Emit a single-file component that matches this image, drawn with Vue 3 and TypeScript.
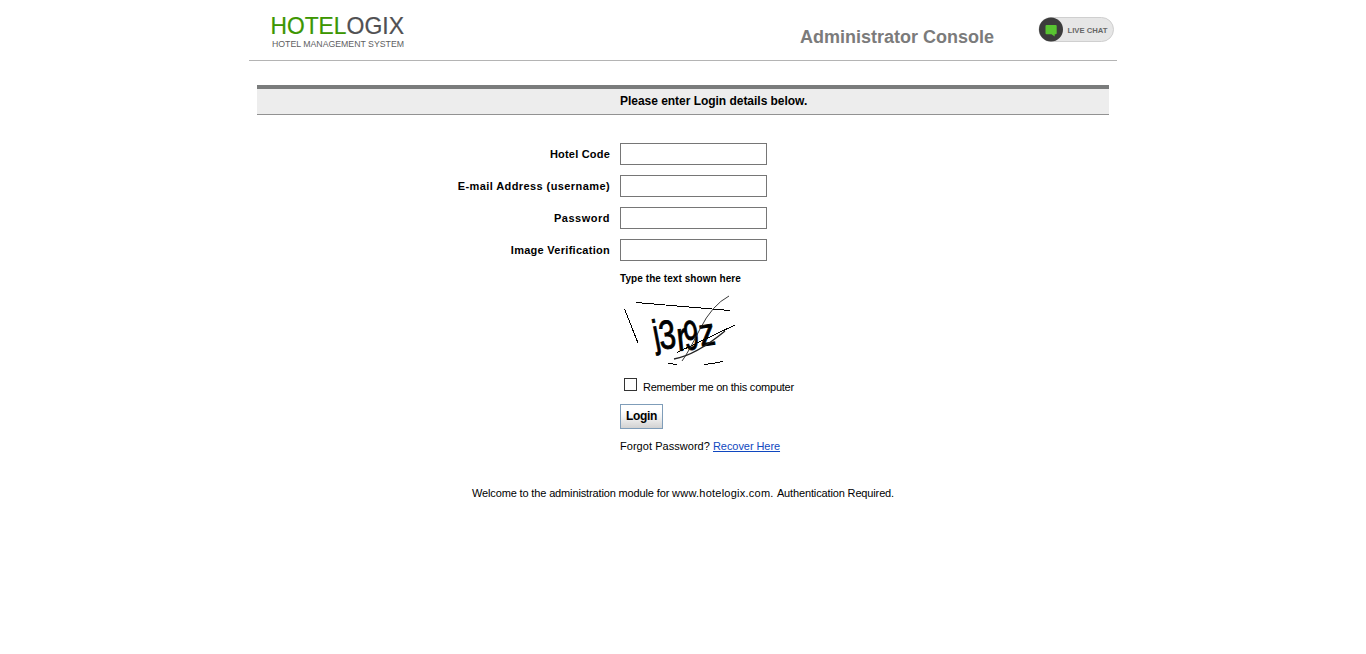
<script setup lang="ts">
import { reactive, ref } from 'vue'

interface Field {
  key: 'hotel' | 'email' | 'password' | 'verification'
  label: string
  type: string
}

const fields: Field[] = [
  { key: 'hotel', label: 'Hotel Code', type: 'text' },
  { key: 'email', label: 'E-mail Address (username)', type: 'text' },
  { key: 'password', label: 'Password', type: 'password' },
  { key: 'verification', label: 'Image Verification', type: 'text' },
]

const form = reactive({ hotel: '', email: '', password: '', verification: '' })
const remember = ref(false)
</script>

<template>
  <div class="page">
    <header class="header">
      <svg class="logo" width="140" height="40" viewBox="0 0 140 40" role="img" aria-label="Hotelogix">
        <text y="24" font-size="24" stroke-width="0.2">
          <tspan x="-0.500" fill="#3c9600" stroke="#3c9600" textLength="76" lengthAdjust="spacingAndGlyphs">HOTEL</tspan>
          <tspan x="75.500" fill="#505052" stroke="#505052" textLength="57.500" lengthAdjust="spacingAndGlyphs">OGIX</tspan>
        </text>
        <text x="1" y="37" font-size="9" fill="#606062" textLength="132" lengthAdjust="spacingAndGlyphs">HOTEL MANAGEMENT SYSTEM</text>
      </svg>
      <h1 class="title">Administrator Console</h1>
      <svg class="chat" width="76" height="26" viewBox="0 0 76 26" role="img" aria-label="Live chat">
        <rect x="1" y="0.5" width="74.500" height="24" rx="12" fill="#e6e6e6" stroke="#cfcfcf" />
        <circle cx="13" cy="12.500" r="12" fill="#3c3c3c" />
        <path d="M8.500 8h9.200q1 0 1 1v7.200q0 1-1 1h-1v2.300l-3.200-2.300h-5q-1 0-1-1V9q0-1 1-1z" fill="#58c431" />
        <text x="29.500" y="15.500" font-size="8" font-weight="bold" fill="#666" textLength="40" lengthAdjust="spacingAndGlyphs">LIVE CHAT</text>
      </svg>
    </header>

    <main class="content">
      <div class="banner">Please enter Login details below.</div>
      <form class="form" @submit.prevent>
        <div v-for="f in fields" :key="f.key" class="row">
          <label class="label" :class="f.key" :for="f.key">{{ f.label }}</label>
          <input :id="f.key" v-model="form[f.key]" class="input" :type="f.type" />
        </div>
        <div class="extras">
          <div class="hint">Type the text shown here</div>
          <svg class="captcha" width="120" height="70" viewBox="0 0 120 70">
            <g font-size="36" fill="#000" stroke="#000" stroke-width="0.8">
              <text transform="translate(35.500 52.500) rotate(-11) scale(.78 1.080)">j</text>
              <text transform="translate(40.500 54.500) rotate(-7) scale(.84 1.120)">3</text>
              <text transform="translate(58 56) rotate(-6) scale(.88 1.120)">r</text>
              <text transform="translate(65.500 55.500) rotate(-7) scale(.74 1.160)">9</text>
              <text transform="translate(81 51.500) rotate(-9) scale(.88 1.080)">z</text>
            </g>
            <g fill="none" stroke="#000" shape-rendering="crispEdges">
              <path d="M16 7.500L110 15.500M4.500 14L18 48M57 57.500L115 30" />
              <path d="M48 68.500L57 69.500M84 69.500L92 68.500L103 66.500" />
            </g>
            <path d="M109 1Q92 10 80 34T62 66" fill="none" stroke="#222" stroke-width="0.900" />
            <path d="M54 64Q76 60 105 36" fill="none" stroke="#222" stroke-width="1.300" />
          </svg>
          <label class="remember">
            <input v-model="remember" class="check" type="checkbox" />
            <span>Remember me on this computer</span>
          </label>
          <button class="login" type="submit">Login</button>
          <p class="forgot">Forgot Password? <a class="link" href="#">Recover Here</a></p>
        </div>
      </form>
      <p class="welcome">Welcome to the administration module for <span class="site">www.hotelogix.com. </span>Authentication Required.</p>
    </main>
  </div>
</template>

<style>
body { background: #fff; }
</style>

<style scoped>
.page {
  width: 868px;
  height: 654px;
  margin: 0 auto;
  overflow: hidden;
  color: #000;
  font-family: "Liberation Sans", Arial, sans-serif;
  font-size: 11px;
}
.page * { box-sizing: border-box; }
.header {
  display: flex;
  height: 61px;
  padding-right: 3px;
  border-bottom: 1px solid #b4b4b4;
}
.logo { margin: 10px 0 0 22px; overflow: visible; }
.title {
  margin: 27px 0 0 auto;
  color: #7b7b7b;
  font-size: 18px;
  line-height: 21px;
  white-space: nowrap;
}
.chat { margin: 17px 0 0 44px; overflow: visible; }
.content { padding: 24px 8px 0; }
.banner {
  height: 30px;
  padding-left: 363px;
  border-top: 4px solid #7a7c7c;
  border-bottom: 1px solid #929292;
  background: #ededed;
  font-size: 12px;
  font-weight: bold;
  letter-spacing: -0.03px;
  line-height: 24px;
}
.form { padding-top: 28px; }
.row {
  display: flex;
  height: 22px;
  margin-bottom: 10px;
}
.label {
  width: 353px;
  margin-right: 10px;
  font-weight: bold;
  line-height: 22px;
  text-align: right;
}
.hotel { letter-spacing: 0.2px; }
.email { letter-spacing: 0.41px; }
.password { letter-spacing: 0.5px; }
.verification { letter-spacing: 0.28px; }
.input {
  width: 147px;
  height: 22px;
  padding: 1px 4px;
  border: 1px solid #767676;
  outline: none;
  background: #fff;
}
.extras {
  display: flex;
  flex-direction: column;
  align-items: flex-start;
  padding-left: 363px;
}
.hint {
  margin-top: 2px;
  font-size: 10px;
  font-weight: bold;
  letter-spacing: 0.07px;
  line-height: 12px;
}
.captcha { margin-top: 10px; }
.remember {
  display: flex;
  align-items: flex-start;
  height: 26px;
  padding: 13px 0 0 4px;
  letter-spacing: -0.22px;
  line-height: 19px;
  white-space: nowrap;
}
.check {
  width: 13px;
  height: 13px;
  margin: 0 6px 0 0;
  appearance: none;
  border: 1px solid #333;
  background: #fff;
}
.check:checked { background: #333; }
.login {
  width: 43px;
  height: 25px;
  margin-top: 13px;
  padding: 0 0 1px;
  border: 1px solid #7f9db9;
  background: linear-gradient(#fff 25%, #f4f4f4 50%, #d2d2d2);
  color: #000;
  font: bold 12px/22px "Liberation Sans", Arial, sans-serif;
  letter-spacing: -0.3px;
}
.forgot { margin: 11px 0 0; letter-spacing: 0.04px; line-height: 13px; }
.link { color: #1048c0; letter-spacing: -0.07px; text-decoration: underline; }
.welcome { margin: 34px 0 0; letter-spacing: -0.14px; line-height: 13px; text-align: center; }
.site { letter-spacing: 0.24px; }
</style>
